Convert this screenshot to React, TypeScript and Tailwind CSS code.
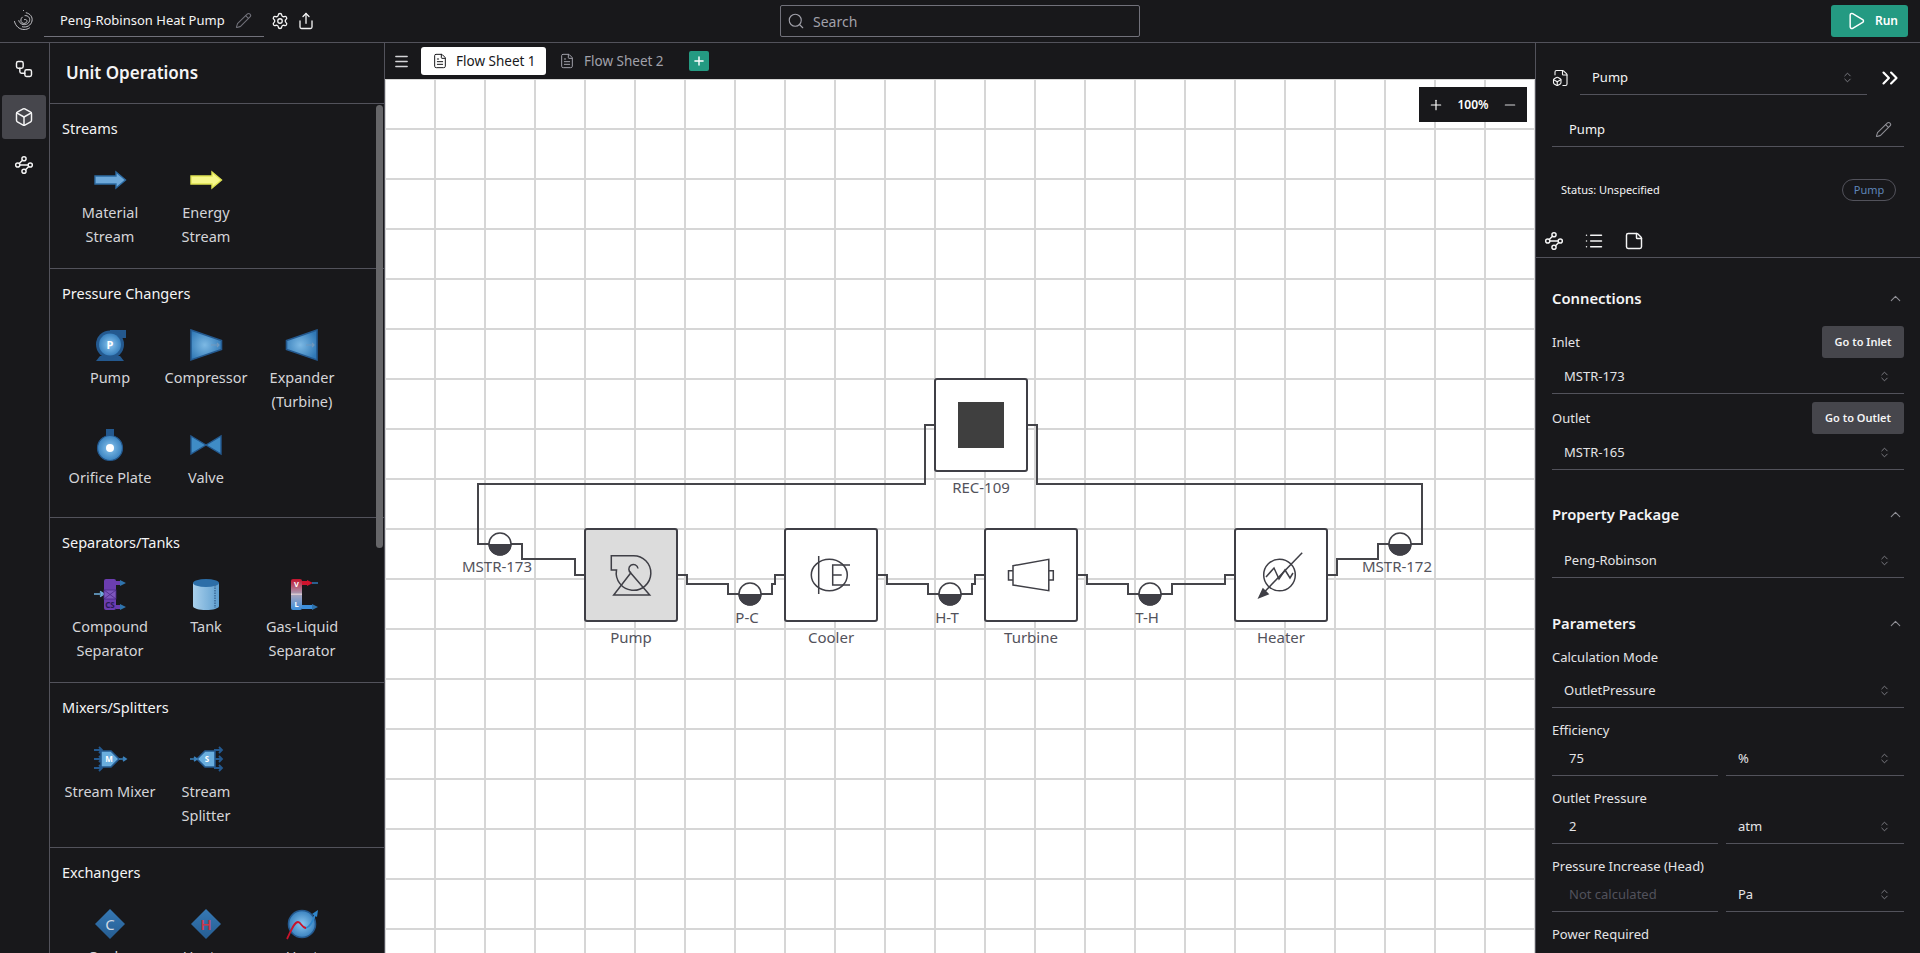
import {
  Box,
  ChevronUp,
  ChevronsRight,
  ChevronsUpDown,
  FileBox,
  FileText,
  List,
  Menu,
  Minus,
  Pencil,
  Play,
  Plus,
  Search,
  Settings,
  Share,
  StickyNote,
  Waypoints,
  Workflow,
} from "lucide-react";
import type { ReactNode } from "react";

const BLUE_DARK = "#24598f";

function IconDefs() {
  return (
    <svg className="absolute h-0 w-0">
      <defs>
        <radialGradient id="ballBlue">
          <stop offset="0%" stopColor="#8ac6f0" />
          <stop offset="100%" stopColor="#3a82bf" />
        </radialGradient>
        <radialGradient id="coneBlue" cx="45%" cy="50%" r="60%">
          <stop offset="0%" stopColor="#7db9e4" />
          <stop offset="100%" stopColor="#2f78b6" />
        </radialGradient>
        <linearGradient id="tankBlue" x1="0" x2="1" y1="0" y2="0">
          <stop offset="0%" stopColor="#a9d0ec" />
          <stop offset="100%" stopColor="#5f9fd0" />
        </linearGradient>
        <linearGradient id="vapLiq" x1="0" x2="0" y1="0" y2="1">
          <stop offset="0%" stopColor="#c4122c" />
          <stop offset="50%" stopColor="#a9a4bd" />
          <stop offset="100%" stopColor="#3c8fdc" />
        </linearGradient>
        <linearGradient id="diamond" x1="0" x2="0" y1="0" y2="1">
          <stop offset="0%" stopColor="#3679b5" />
          <stop offset="100%" stopColor="#265d92" />
        </linearGradient>
      </defs>
    </svg>
  );
}

function Glyph({ children }: { children: ReactNode }) {
  return (
    <svg viewBox="0 0 32 32" className="h-8 w-8 shrink-0 overflow-visible">
      {children}
    </svg>
  );
}

const unitIcons: Record<string, ReactNode> = {
  material: (
    <path d="M1 12H22V8L31.5 16L22 24V20H1Z" fill="#6ea9da" stroke="#2d6ba3" strokeWidth="1.4" />
  ),
  energy: (
    <path d="M1 12H22V8L31.5 16L22 24V20H1Z" fill="#f6f78c" stroke="#dfe351" strokeWidth="1.4" />
  ),
  pump: (
    <>
      <rect x="16" y="1" width="16" height="8" fill={BLUE_DARK} />
      <path d="M2 32L6 27H26L30 32Z" fill={BLUE_DARK} />
      <circle cx="16" cy="15.5" r="14" fill={BLUE_DARK} />
      <circle cx="16" cy="15.5" r="11" fill="url(#ballBlue)" />
      <text x="16" y="20" textAnchor="middle" fontSize="11" fontWeight="700" fill="#fff">P</text>
    </>
  ),
  compressor: (
    <>
      <path d="M1 1L31.5 11.5V20.5L1 31Z" fill="url(#coneBlue)" stroke={BLUE_DARK} strokeWidth="1.6" />
      <path d="M21 16H29M27 14L29 16L27 18" fill="none" stroke="#7298bb" strokeWidth="1.2" />
    </>
  ),
  expander: (
    <>
      <path d="M31 1L0.5 11.5V20.5L31 31Z" fill="url(#coneBlue)" stroke={BLUE_DARK} strokeWidth="1.6" />
      <path d="M20 16H28M26 14L28 16L26 18" fill="none" stroke="#7298bb" strokeWidth="1.2" />
    </>
  ),
  orifice: (
    <>
      <rect x="12" y="0" width="8" height="9" fill={BLUE_DARK} />
      <circle cx="16" cy="19" r="12.5" fill="url(#ballBlue)" stroke={BLUE_DARK} strokeWidth="1.2" />
      <circle cx="16" cy="19" r="4" fill="#fff" />
    </>
  ),
  valve: (
    <path d="M1 7L16 16L31 7V25L16 16L1 25Z" fill="#3f8cc6" stroke={BLUE_DARK} strokeWidth="1.4" />
  ),
  compound: (
    <>
      <rect x="22" y="3" width="5" height="4" fill="#6b3db0" />
      <rect x="22" y="27" width="5" height="4" fill="#6b3db0" />
      <path d="M26 2L32 5L26 8ZM26 26L32 29L26 32Z" fill="#2f73ad" />
      <path d="M0 16H8M6 13.5L10 16L6 18.5" fill="none" stroke="#6fb0de" strokeWidth="1.6" />
      <rect x="10" y="1" width="12" height="31" rx="2" fill="#6b3db0" />
      <rect x="10" y="12" width="12" height="9" fill="#7d56bd" stroke="#4a2a86" strokeWidth="0.8" />
      <path d="M10 12L22 21M22 12L10 21" stroke="#4a2a86" strokeWidth="0.8" />
      <text x="16" y="30" textAnchor="middle" fontSize="8" fontWeight="700" fill="#2a1a55">CS</text>
    </>
  ),
  tank: (
    <>
      <path d="M3 5V28C3 30.5 9 32 16 32S29 30.5 29 28V5Z" fill="url(#tankBlue)" />
      <ellipse cx="16" cy="5" rx="13" ry="4" fill="#2c6ea8" />
      <path d="M25 7V30" stroke="#3f6f9b" strokeWidth="1.6" strokeDasharray="1.5 1" />
    </>
  ),
  flash: (
    <>
      <rect x="16" y="3" width="6" height="4" fill="#d0122c" />
      <path d="M21 2L27 5L21 8Z" fill="#d0122c" />
      <path d="M26 5H32" stroke="#2f73ad" strokeWidth="1.6" />
      <rect x="16" y="27" width="10" height="4" fill="#3c8fdc" />
      <path d="M26 26L32 29L26 32Z" fill="#2f73ad" />
      <rect x="5" y="1" width="11" height="31" rx="2" fill="url(#vapLiq)" />
      <rect x="5" y="15.5" width="11" height="1.5" fill="#d8c8d0" />
      <text x="10.5" y="9" textAnchor="middle" fontSize="7.5" fontWeight="700" fill="#fff">V</text>
      <text x="10.5" y="29" textAnchor="middle" fontSize="7.5" fontWeight="700" fill="#fff">L</text>
    </>
  ),
  mixer: (
    <>
      <path d="M0 7H8M0 16H8M0 25H8M5 4L8 7L5 10M5 13L8 16L5 19M5 22L8 25L5 28" fill="none" stroke={BLUE_DARK} strokeWidth="1.8" />
      <path d="M7 8H17L25 16L17 24H7Z" fill="#6aaede" stroke={BLUE_DARK} strokeWidth="1.6" />
      <path d="M25 16H31M29 14L32 16L29 18" fill="none" stroke="#3a80bb" strokeWidth="1.6" />
      <text x="15" y="19" textAnchor="middle" fontSize="8" fontWeight="700" fill="#fff">M</text>
    </>
  ),
  splitter: (
    <>
      <path d="M24 7H32M24 16H32M24 25H32M29 4L32 7L29 10M29 13L32 16L29 19M29 22L32 25L29 28" fill="none" stroke={BLUE_DARK} strokeWidth="1.8" />
      <path d="M25 8H15L7 16L15 24H25Z" fill="#6aaede" stroke={BLUE_DARK} strokeWidth="1.6" />
      <path d="M0 16H6M4 14L7 16L4 18" fill="none" stroke="#3a80bb" strokeWidth="1.6" />
      <text x="17" y="19" textAnchor="middle" fontSize="8" fontWeight="700" fill="#fff">S</text>
    </>
  ),
  cooler: (
    <>
      <path d="M16 1L31 16L16 31L1 16Z" fill="url(#diamond)" />
      <text x="16" y="21.5" textAnchor="middle" fontSize="15" fill="#cfd8e2">C</text>
    </>
  ),
  heater: (
    <>
      <path d="M16 1L31 16L16 31L1 16Z" fill="url(#diamond)" />
      <text x="16" y="21.5" textAnchor="middle" fontSize="15" fontWeight="600" fill="#c8384a">H</text>
    </>
  ),
  exchanger: (
    <>
      <circle cx="16" cy="16" r="13.5" fill="url(#ballBlue)" stroke={BLUE_DARK} strokeWidth="1.6" />
      <path d="M20 20C24 19 27 13 29.5 6" fill="none" stroke="#2f86cc" strokeWidth="1.8" />
      <path d="M26 6L32 2L31 9Z" fill="#2f86cc" />
      <path d="M1 31C5 23 8 14 12 14C15 14 16 20 20 20" fill="none" stroke="#c9142c" strokeWidth="1.8" />
    </>
  ),
};

const sections = [
  { title: "Streams", extra: "pb-[20px]", items: [["material", "Material Stream"], ["energy", "Energy Stream"]] },
  {
    title: "Pressure Changers",
    extra: "pb-[28px]",
    items: [
      ["pump", "Pump"],
      ["compressor", "Compressor"],
      ["expander", "Expander (Turbine)"],
      ["orifice", "Orifice Plate"],
      ["valve", "Valve"],
    ],
  },
  {
    title: "Separators/Tanks",
    extra: "pb-[20px]",
    items: [["compound", "Compound Separator"], ["tank", "Tank"], ["flash", "Gas-Liquid Separator"]],
  },
  { title: "Mixers/Splitters", extra: "pb-[20px]", items: [["mixer", "Stream Mixer"], ["splitter", "Stream Splitter"]] },
  { title: "Exchangers", extra: "pb-[20px]", items: [["cooler", "Cooler"], ["heater", "Heater"], ["exchanger", "Heat Exchanger"]] },
];

function Logo() {
  return (
    <svg viewBox="0 0 24 24" className="h-6 w-6" fill="none" stroke="#d4d4d8" strokeWidth="0.9" strokeLinecap="round">
      <path d="M12.5 10.5c1.5-.5 2.8.6 2.4 2.1-.5 1.8-3.2 2.4-4.8 1.2-1.8-1.4-1.6-4.3.2-5.7" />
      <path d="M13 6.6c3.2-.3 5.2 2.2 4.6 5-.7 3.3-4.6 4.9-7.6 3.6-1.6-.7-2.8-2-3.2-3.6" />
      <path d="M14.2 3.8c4 .7 6.6 4.2 5.8 8.2-.9 4.4-5.4 6.9-9.6 5.8" />
      <path d="M2.5 12.5c1 4.6 4.8 8 9.6 8 2 0 3.8-.5 5.4-1.6" />
      <path d="M11.5 1.5h.1" />
    </svg>
  );
}

function Header() {
  return (
    <header className="flex h-[43px] shrink-0 items-center border-b border-[#52525b] bg-[#18181b]">
      <div className="flex w-[44px] shrink-0 justify-center pl-[4px]">
        <Logo />
      </div>
      <div className="flex h-[32px] w-[220px] shrink-0 items-center justify-between border-b border-[#71717a] pl-[16px] pr-[12px]">
        <span className="whitespace-nowrap text-[13px] text-[#f4f4f5]">Peng-Robinson Heat Pump</span>
        <Pencil size={17} strokeWidth={1.5} className="text-[#71717a]" />
      </div>
      <Settings size={18} strokeWidth={1.75} className="ml-[7px] text-[#f4f4f5]" />
      <Share size={18} strokeWidth={1.75} className="ml-[8px] text-[#f4f4f5]" />
      <div className="ml-[465px] flex h-[32px] w-[360px] items-center rounded-[2px] border border-[#71717a]">
        <Search size={18} strokeWidth={1.5} className="ml-[6px] text-[#a1a1aa]" />
        <span className="ml-[8px] text-[14px] text-[#a1a1aa]">Search</span>
      </div>
      <button className="ml-[691px] flex h-[32px] w-[77px] items-center rounded-[3px] bg-[#249a82] pl-[15px] text-[12px] font-semibold text-white">
        <Play size={20} strokeWidth={1.75} />
        <span className="ml-[9px]">Run</span>
      </button>
    </header>
  );
}

function Rail() {
  return (
    <nav className="flex w-[50px] shrink-0 flex-col items-center gap-[4px] border-r border-[#52525b] bg-[#18181b] pr-[1px] pt-[4px] text-[#f4f4f5]">
      <div className="flex h-[44px] w-[44px] items-center justify-center">
        <Workflow size={20} strokeWidth={1.75} />
      </div>
      <div className="flex h-[44px] w-[44px] items-center justify-center rounded-[3px] bg-[#46464c]">
        <Box size={20} strokeWidth={1.75} />
      </div>
      <div className="flex h-[44px] w-[44px] items-center justify-center">
        <Waypoints size={20} strokeWidth={1.75} />
      </div>
    </nav>
  );
}

function UnitPanel() {
  return (
    <aside className="relative flex w-[335px] shrink-0 flex-col overflow-hidden border-r border-[#52525b] bg-[#18181b]">
      <div className="flex h-[61px] shrink-0 items-center border-b border-[#52525b] pl-[16px]">
        <h1 className="text-[17px] font-semibold text-[#f4f4f5]">Unit Operations</h1>
      </div>
      <div className="min-h-0 flex-1">
        {sections.map((s) => (
          <section key={s.title} className={`border-b border-[#52525b] pl-[12px] ${s.extra}`}>
            <h2 className="flex h-[60px] items-start pt-[13px] text-[14.5px] leading-[22px] text-[#f4f4f5]">{s.title}</h2>
            <div className="grid grid-cols-[96px_96px_96px] gap-y-[16px]">
              {s.items.map(([icon, label]) => (
                <div key={label} className="flex flex-col items-center">
                  <Glyph>{unitIcons[icon]}</Glyph>
                  <span className="mt-[4px] w-[96px] text-center text-[14.5px] leading-[24px] text-[#d4d4d8]">{label}</span>
                </div>
              ))}
            </div>
          </section>
        ))}
      </div>
      <div className="absolute right-[1px] top-[62px] h-[443px] w-[7px] rounded-full bg-[#666669]" />
    </aside>
  );
}

const nodes = [
  { label: "Pump", pos: "left-[199px] top-[449px]", tone: "bg-[#dcdcdc]", icon: (
    <>
      <path d="M26.3 26.7H48A17.3 17.3 0 1 1 31.5 41H26.3Z" />
      <path d="M45.7 44L28.7 66H64.7Z" />
      <path d="M53 39.5A4.6 4.6 0 1 0 46 44" />
    </>
  ) },
  { label: "Cooler", pos: "left-[399px] top-[449px]", tone: "bg-white", icon: (
    <>
      <ellipse cx="44.3" cy="46" rx="18" ry="15.7" />
      <path d="M33.7 27V65" />
      <path d="M65 36H47.7V56H65M47.7 46H56.7" />
    </>
  ) },
  { label: "Turbine", pos: "left-[599px] top-[449px]", tone: "bg-white", icon: (
    <>
      <path d="M28 36.7L63.8 30.3V61.7L28 56Z" />
      <path d="M28 41.7H23.5V51H28M63.8 41.7H68.3V51H63.8" />
    </>
  ) },
  { label: "Heater", pos: "left-[849px] top-[449px]", tone: "bg-white", icon: (
    <>
      <circle cx="44.5" cy="46" r="15.8" />
      <path d="M67.2 23.7L27 65.5" />
      <path d="M24 68.5L33 65L28 60Z" fill="#3f3f46" />
      <path d="M31 48L39 39L44 50L50 41L55 49L58 44" />
    </>
  ) },
  { label: "REC", pos: "left-[549px] top-[299px]", tone: "bg-white", icon: (
    <rect x="23" y="23" width="46" height="46" fill="#3f3f3f" stroke="none" />
  ) },
];

const labels = [
  { text: "MSTR-173", pos: "left-[112px] top-[477px]" },
  { text: "Pump", pos: "left-[246px] top-[548px]" },
  { text: "P-C", pos: "left-[362px] top-[528px]" },
  { text: "Cooler", pos: "left-[446px] top-[548px]" },
  { text: "REC-109", pos: "left-[596px] top-[398px]" },
  { text: "H-T", pos: "left-[562px] top-[528px]" },
  { text: "Turbine", pos: "left-[646px] top-[548px]" },
  { text: "T-H", pos: "left-[762px] top-[528px]" },
  { text: "Heater", pos: "left-[896px] top-[548px]" },
  { text: "MSTR-172", pos: "left-[1012px] top-[477px]" },
];

const edges = [
  "M935 425H925V484H478V544H489",
  "M511 544H522V559H575V575H585",
  "M677 575H687V584H728V594H739",
  "M761 594H772V584H775V575H785",
  "M877 575H887V584H928V594H939",
  "M961 594H972V584H975V575H985",
  "M1077 575H1087V584H1128V594H1139",
  "M1161 594H1172V584H1225V575H1235",
  "M1327 575H1337V559H1378V544H1389",
  "M1411 544H1422V484H1037V425H1027",
];

const streamDots = [
  [500, 544],
  [750, 594],
  [950, 594],
  [1150, 594],
  [1400, 544],
];

function Canvas() {
  return (
    <div className="relative min-h-0 flex-1 overflow-hidden bg-white bg-[linear-gradient(to_right,#d6d6d6_2px,transparent_2px),linear-gradient(to_bottom,#d6d6d6_2px,transparent_2px)] bg-[size:50px_50px] bg-[position:49px_49px]">
      <svg viewBox="385 79 1150 874" className="absolute left-0 top-0 h-[874px] w-[1150px]" fill="none">
        {edges.map((d) => (
          <path key={d} d={d} stroke="#45454a" strokeWidth="2" />
        ))}
        {streamDots.map(([x, y]) => (
          <g key={`${x}-${y}`}>
            <circle cx={x} cy={y} r="11" fill="#fff" stroke="#3f3f46" strokeWidth="1.5" />
            <path d={`M${x - 11.5} ${y}A11.5 11.5 0 0 0 ${x + 11.5} ${y}Z`} fill="#3f3f46" />
          </g>
        ))}
      </svg>
      {nodes.map((n) => (
        <div key={n.label} className={`absolute h-[94px] w-[94px] rounded-[3px] border-2 border-[#3f3f46] ${n.pos} ${n.tone}`}>
          <svg viewBox="0 0 92 92" className="absolute -left-[1px] -top-[1px] h-[92px] w-[92px]" fill="none" stroke="#3f3f46" strokeWidth="1.5">
            {n.icon}
          </svg>
        </div>
      ))}
      {labels.map((l) => (
        <span key={l.text} className={`absolute -translate-x-1/2 text-[15px] leading-[20px] text-[#52525b] ${l.pos}`}>
          {l.text}
        </span>
      ))}
      <div className="absolute right-[8px] top-[8px] flex h-[35px] w-[108px] items-center justify-between bg-[#18181b] px-[9px] text-white">
        <Plus size={16} strokeWidth={1.75} />
        <span className="text-[12px] font-semibold">100%</span>
        <Minus size={16} strokeWidth={1.75} className="text-[#d4d4d8]" />
      </div>
    </div>
  );
}

function Tabs() {
  return (
    <div className="flex h-[36px] shrink-0 items-center bg-[#18181b]">
      <Menu size={17} strokeWidth={2} className="ml-[8px] text-[#d4d4d8]" />
      <div className="ml-[11px] flex h-[28px] w-[125px] items-center rounded-[3px] bg-white pl-[11px] text-[13.5px] text-[#18181b]">
        <FileText size={16} strokeWidth={1.5} />
        <span className="ml-[8px]">Flow Sheet 1</span>
      </div>
      <div className="ml-[13px] flex items-center text-[13.5px] text-[#a1a1aa]">
        <FileText size={16} strokeWidth={1.5} />
        <span className="ml-[9px]">Flow Sheet 2</span>
      </div>
      <div className="ml-[25px] flex h-[20px] w-[20px] items-center justify-center rounded-[2px] bg-[#249a82] text-white">
        <Plus size={14} strokeWidth={2.5} />
      </div>
    </div>
  );
}

function SelectField({ value, className = "" }: { value: string; className?: string }) {
  return (
    <div className={`flex h-[35px] items-center justify-between border-b border-[#52525b] pl-[12px] pr-[13px] text-[13px] text-[#e4e4e7] ${className}`}>
      <span className="pt-[2px]">{value}</span>
      <ChevronsUpDown size={13} strokeWidth={1.5} className="text-[#8f8f96]" />
    </div>
  );
}

function SectionHead({ title, className }: { title: string; className: string }) {
  return (
    <div className={`flex h-[24px] items-center justify-between pr-[1px] ${className}`}>
      <h3 className="text-[14.8px] font-semibold text-[#f4f4f5]">{title}</h3>
      <ChevronUp size={17} strokeWidth={1.5} className="mr-[-1px] text-[#8f8f96]" />
    </div>
  );
}

function GoRow({ label, button, width, className }: { label: string; button: string; width: string; className: string }) {
  return (
    <div className={`flex h-[32px] items-center justify-between ${className}`}>
      <span className="pt-[2px] text-[13px] text-[#e4e4e7]">{label}</span>
      <button className={`h-[32px] rounded-[3px] bg-[#46464c] text-center text-[11px] font-semibold text-[#f4f4f5] ${width}`}>{button}</button>
    </div>
  );
}

function ParamRow({ label, value, unit, muted }: { label: string; value: string; unit: string; muted?: boolean }) {
  return (
    <div>
      <div className="mt-[11px] flex h-[22px] items-center pt-[2px] text-[13px] text-[#e4e4e7]">{label}</div>
      <div className="flex gap-[8px]">
        <div className={`flex h-[35px] w-[166px] items-center border-b border-[#52525b] pl-[17px] pt-[2px] text-[13px] ${muted ? "text-[#52525b]" : "text-[#e4e4e7]"}`}>
          {value}
        </div>
        <SelectField value={unit} className="flex-1" />
      </div>
    </div>
  );
}

function PropertiesPanel() {
  return (
    <aside className="flex w-[385px] shrink-0 flex-col overflow-hidden border-l border-[#52525b] bg-[#18181b]">
      <div className="mt-[17px] flex h-[35px] items-center pl-[16px]">
        <FileBox size={18} strokeWidth={1.5} className="text-[#f4f4f5]" />
        <div className="ml-[10px] flex h-[35px] w-[287px] items-center justify-between border-b border-[#52525b] pl-[12px] pr-[13px] text-[13px] text-[#f4f4f5]">
          <span className="pt-[2px]">Pump</span>
          <ChevronsUpDown size={13} strokeWidth={1.5} className="text-[#8f8f96]" />
        </div>
        <ChevronsRight size={26} strokeWidth={2} className="ml-[10px] text-white" />
      </div>
      <div className="mx-[16px] mt-[17px] flex h-[35px] items-center justify-between border-b border-[#52525b] pl-[17px] pr-[12px] text-[13px] text-[#f4f4f5]">
        <span className="pt-[2px]">Pump</span>
        <Pencil size={17} strokeWidth={1.5} className="text-[#8f8f96]" />
      </div>
      <div className="mt-[32px] flex h-[22px] items-center justify-between pl-[25px] pr-[24px]">
        <span className="text-[11px] text-[#f4f4f5]">Status: Unspecified</span>
        <span className="flex h-[22px] w-[54px] items-center justify-center rounded-full border border-[#52525b] text-[11px] text-[#5f86b8]">Pump</span>
      </div>
      <div className="flex h-[57px] items-end gap-[20px] border-b border-[#52525b] pb-[6px] pl-[8px] text-[#f4f4f5]">
        <Waypoints size={20} strokeWidth={1.75} />
        <List size={20} strokeWidth={1.75} />
        <StickyNote size={20} strokeWidth={1.75} />
      </div>
      <div className="px-[16px]">
        <SectionHead title="Connections" className="mt-[28px]" />
        <GoRow label="Inlet" button="Go to Inlet" width="w-[82px]" className="mt-[16px]" />
        <SelectField value="MSTR-173" className="mt-[1px]" />
        <GoRow label="Outlet" button="Go to Outlet" width="w-[92px]" className="mt-[8px]" />
        <SelectField value="MSTR-165" className="mt-[1px]" />
        <SectionHead title="Property Package" className="mt-[32px]" />
        <SelectField value="Peng-Robinson" className="mt-[17px]" />
        <SectionHead title="Parameters" className="mt-[33px]" />
        <div className="mt-[11px] flex h-[22px] items-center pt-[2px] text-[13px] text-[#e4e4e7]">Calculation Mode</div>
        <SelectField value="OutletPressure" className="mt-[5px]" />
        <ParamRow label="Efficiency" value="75" unit="%" />
        <ParamRow label="Outlet Pressure" value="2" unit="atm" />
        <ParamRow label="Pressure Increase (Head)" value="Not calculated" unit="Pa" muted />
        <div className="mt-[11px] flex h-[22px] items-center pt-[2px] text-[13px] text-[#e4e4e7]">Power Required</div>
      </div>
    </aside>
  );
}

export default function App() {
  return (
    <div className="flex h-screen w-screen flex-col overflow-hidden bg-[#18181b] [font-family:'Noto_Sans',sans-serif]">
      <IconDefs />
      <Header />
      <div className="flex min-h-0 flex-1">
        <Rail />
        <UnitPanel />
        <main className="flex min-w-0 flex-1 flex-col">
          <Tabs />
          <Canvas />
        </main>
        <PropertiesPanel />
      </div>
    </div>
  );
}
